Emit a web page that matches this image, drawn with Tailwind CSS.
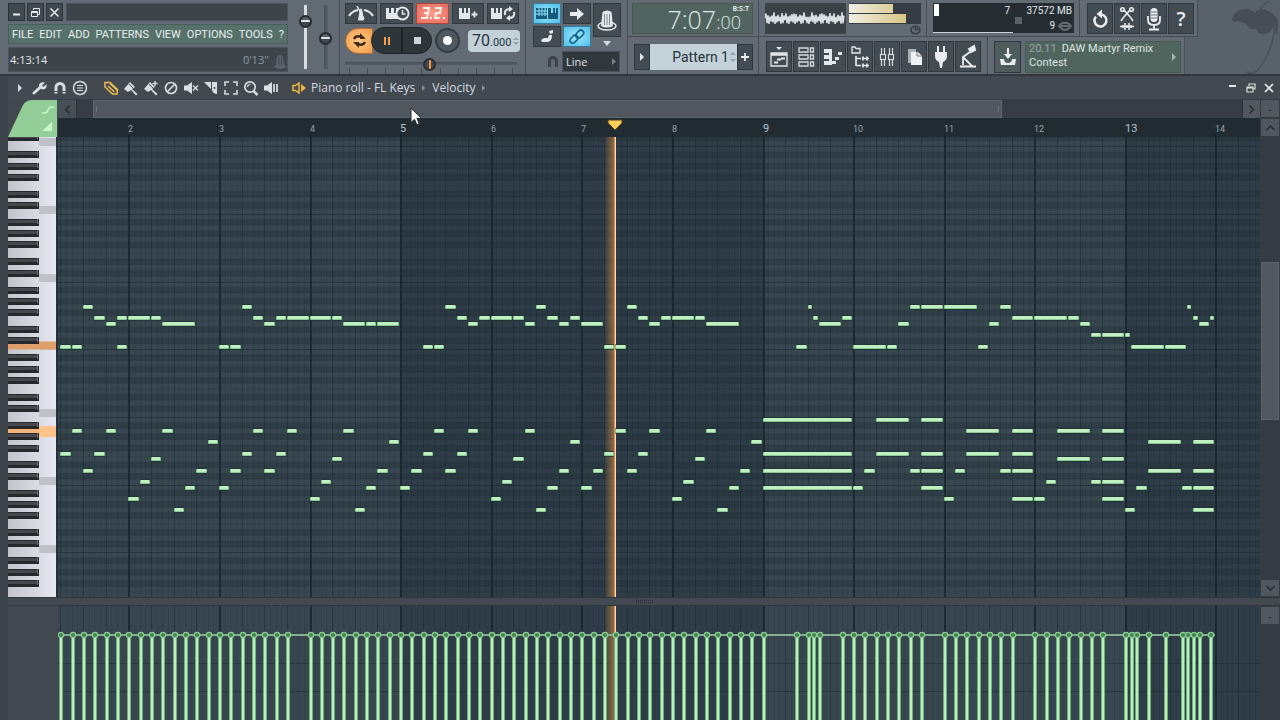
<!DOCTYPE html>
<html lang="en">
<head>
<meta charset="utf-8">
<title>Piano roll - FL Keys</title>
<script src="https://cdn.jsdelivr.net/npm/@tailwindcss/browser@4"></script>
</head>
<body class="bg-[#41484f] font-['Open_Sans','Noto_Sans',sans-serif] text-[#d5dbe0]">
<div class="relative flex h-screen min-h-[500px] flex-col overflow-hidden">

<!-- Toolbar -->
<header class="flex shrink-0 items-stretch border-b-2 border-[#30373e] bg-[#5a6269]">
  <!-- Menu and hint panel -->
  <section class="flex w-[340px] shrink-0 border-r border-[#454c53] bg-[#626b73] pl-2">
    <div class="flex w-[280px] flex-col gap-[3px] pt-[3px] pb-[2px]">
      <div class="flex h-[18px] gap-[2px]">
        <button aria-label="Minimize" class="flex w-[17px] items-center justify-center border border-[#2b3238] bg-[#414950]"><svg width="11" height="11" viewBox="0 0 11 11"><path d="M2 7.5h7" stroke="#e6ebef" stroke-width="2"/></svg></button>
        <button aria-label="Restore" class="flex w-[17px] items-center justify-center border border-[#2b3238] bg-[#414950]"><svg width="11" height="11" viewBox="0 0 11 11" fill="none" stroke="#e6ebef"><path d="M3.5 3V1.5h6v6H8M1.5 4.500h6v5h-6zM1.5 5.500h6"/></svg></button>
        <button aria-label="Close" class="flex w-[17px] items-center justify-center border border-[#2b3238] bg-[#414950]"><svg width="11" height="11" viewBox="0 0 11 11"><path d="M1.500 1.500l8 8M9.500 1.500l-8 8" stroke="#e6ebef" stroke-width="1.500"/></svg></button>
        <div class="ml-px flex-1 border border-[#4d555c] bg-[#3d454b]"></div>
      </div>
      <nav class="flex h-5 items-center justify-between border border-[#4a5f5a] bg-[#56706a] px-[3px] font-['Roboto',sans-serif] text-[11px] leading-none text-[#e8f1ee]">
        <button>FILE</button><button>EDIT</button><button>ADD</button><button>PATTERNS</button><button>VIEW</button><button>OPTIONS</button><button>TOOLS</button><button>?</button>
      </nav>
      <div class="flex flex-1 items-center border border-[#4d555c] bg-[#3d454b] pl-px text-[11px] leading-none">
        <span class="flex-1 text-[#e4e9ed]">4:13:14</span><span class="text-[#8f979d]">0'13''</span>
        <svg class="mt-1 ml-[4px]" width="14" height="18" viewBox="0 0 14 18"><path d="M4 3q3-2 6 0l1 9q3 0 2 2-6 4-12 0 0-2 2-2z" fill="#59626a"/><path d="M6 4v8M8.500 4v8" stroke="#434b52"/></svg>
      </div>
    </div>
    <div class="flex flex-1 items-center justify-center gap-1 pl-1">
      <input aria-label="Main volume" type="range" value="80" class="h-[64px] w-4 appearance-none bg-[linear-gradient(90deg,transparent_6px,#d8dde1_6px,#d8dde1_9px,transparent_9px)] [direction:rtl] [writing-mode:vertical-lr] [&::-webkit-slider-thumb]:size-[13px] [&::-webkit-slider-thumb]:appearance-none [&::-webkit-slider-thumb]:rounded-full [&::-webkit-slider-thumb]:border-2 [&::-webkit-slider-thumb]:border-[#262c31] [&::-webkit-slider-thumb]:bg-[linear-gradient(#596168_3px,#dde2e6_3px,#dde2e6_5px,#41484f_5px)]">
      <input aria-label="Main pitch" type="range" value="47" class="h-[64px] w-4 appearance-none bg-[linear-gradient(90deg,transparent_6px,#484f56_6px,#596168_10px,transparent_10px)] [direction:rtl] [writing-mode:vertical-lr] [&::-webkit-slider-thumb]:size-[13px] [&::-webkit-slider-thumb]:appearance-none [&::-webkit-slider-thumb]:rounded-full [&::-webkit-slider-thumb]:border-2 [&::-webkit-slider-thumb]:border-[#262c31] [&::-webkit-slider-thumb]:bg-[linear-gradient(#596168_3px,#dde2e6_3px,#dde2e6_5px,#41484f_5px)]">
    </div>
  </section>

  <!-- Transport -->
  <section class="flex w-[186px] shrink-0 flex-col border-r border-[#454c53] bg-[#626b73] pt-[3px] pl-[5px]">
    <div class="flex h-[21px] gap-[3px]">
      <button aria-label="Metronome" class="flex w-8 items-center justify-center border border-[#30373d] bg-[#444c53]"><svg width="28" height="17" viewBox="0 0 28 17" fill="none" stroke="#e3e8ec"><path d="M2 11q3-5 9-6M17 5q6 1 9 6" stroke-width="2"/><path d="M11.500 15l2-11h1l2 11z" fill="#e3e8ec"/><path d="M10 1l7 13" stroke-width="1.500"/></svg></button>
      <button aria-label="Wait for input" class="flex w-[33px] items-center justify-center border border-[#30373d] bg-[#444c53]"><svg width="28" height="17" viewBox="0 0 28 17" fill="none" stroke="#e3e8ec"><path d="M3 3h3v5h2V3h3v5h2V3h2v11H3z" fill="#e3e8ec" stroke="none"/><circle cx="19.500" cy="8.500" r="6" fill="#444c53" stroke-width="1.800"/><path d="M19.500 5v4h3" stroke-width="1.500"/></svg></button>
      <button aria-label="Countdown" class="flex w-[33px] items-center justify-center border border-[#a5453c] bg-[radial-gradient(#ff9d8c,#e6695b)]"><svg width="27" height="17" viewBox="0 0 27 17" fill="none" stroke="#fff1e8" stroke-width="2"><path d="M4 3h6L9 8H5h4l-1 5H2M16 3h6l-1 5h-4l-1 5h5"/><path d="M11 13h2M24 13h2"/></svg></button>
      <button aria-label="Overdub" class="flex w-8 items-center justify-center border border-[#30373d] bg-[#444c53]"><svg width="28" height="17" viewBox="0 0 28 17"><path d="M5 3h3v5h2V3h2v5h2V3h2v11H5z" fill="#e3e8ec"/><path d="M17.500 9.500h6M20.500 6.500v6" stroke="#e3e8ec" stroke-width="1.800"/></svg></button>
      <button aria-label="Loop record" class="flex w-8 items-center justify-center border border-[#30373d] bg-[#444c53]"><svg width="28" height="17" viewBox="0 0 28 17" fill="none"><path d="M2 3h3v5h2V3h2v5h2V3h2v11H2z" fill="#e3e8ec"/><path d="M16 10q-1-6 5-6M25 7q1 6-5 6" stroke="#e3e8ec" stroke-width="2"/><path d="M20 1l4 3-4 3zM21 10l-4 3 4 3z" fill="#e3e8ec"/></svg></button>
    </div>
    <div class="mt-[3px] flex h-[27px] items-center">
      <button aria-label="Song mode" class="-mr-[2px] flex h-[26px] w-7 items-center justify-center rounded-l-full border border-[#b06a33] bg-[radial-gradient(#ffc983,#f19c4e)]"><svg width="15" height="15" viewBox="0 0 15 15" fill="none" stroke="#402a18" stroke-width="2.500"><path d="M2 6q2-4 7-2M13 9q-2 4-7 2"/><path d="M8 0v6h6zM7 15V9H1z" fill="#402a18" stroke="none"/></svg></button>
      <button aria-label="Pause" class="flex h-[27px] w-[31px] items-center justify-center rounded-l-full border border-[#1d2226] bg-[#2e353b]"><svg width="8" height="8" viewBox="0 0 8 8"><path d="M1 0h2v8H1zM5 0h2v8H5z" fill="#f5a04e"/></svg></button>
      <button aria-label="Stop" class="flex h-[27px] w-[30px] items-center justify-center rounded-r-full border border-[#1d2226] bg-[#2e353b]"><span class="size-[7px] bg-[#cfd5da]"></span></button>
      <button aria-label="Record" class="ml-[3px] flex size-[25px] items-center justify-center rounded-full border-2 border-[#343b41] bg-[#50585f]"><span class="size-[9px] rounded-full bg-white"></span></button>
      <label class="ml-2 flex h-[22px] w-[52px] items-center rounded-[4px] bg-[#c3d1d8] pl-[2px] font-['Roboto',sans-serif] text-[#27353d]"><input aria-label="Tempo" value="70" class="w-5 text-right text-base leading-none"><span class="pt-[3px] text-[11px] leading-none">.000</span><svg class="ml-[2px] shrink-0" width="6" height="10" viewBox="0 0 6 10"><path d="M0 4l3-3 3 3zM0 6l3 3 3-3z" fill="#96a5ae"/></svg></label>
    </div>
    <div class="relative w-[172px]">
      <input aria-label="Tempo coarse" type="range" value="49" class="block h-5 w-full appearance-none bg-[linear-gradient(transparent_8px,#484f56_8px,#596168_11px,transparent_11px)] [&::-webkit-slider-thumb]:size-[13px] [&::-webkit-slider-thumb]:appearance-none [&::-webkit-slider-thumb]:rounded-full [&::-webkit-slider-thumb]:border-2 [&::-webkit-slider-thumb]:border-[#262c31] [&::-webkit-slider-thumb]:bg-[linear-gradient(90deg,#41484f_4px,#f0953f_4px,#f0953f_6px,#41484f_6px)]">
      <div class="pointer-events-none absolute inset-x-1 bottom-0 flex h-[6px] justify-between opacity-70"><i class="w-px bg-[#3a4147]"></i><i class="w-px bg-[#3a4147]"></i><i class="w-px bg-[#3a4147]"></i><i class="w-px bg-[#3a4147]"></i><i class="w-px bg-[#3a4147]"></i><i class="w-px bg-[#3a4147]"></i><i class="w-px bg-[#3a4147]"></i><i class="w-px bg-[#3a4147]"></i><i class="w-px bg-[#3a4147]"></i><i class="w-px bg-[#3a4147]"></i></div>
    </div>
  </section>

  <!-- Recording options -->
  <section class="flex w-[102px] shrink-0 flex-col border-r border-[#454c53] bg-[#626b73] pt-[3px] pl-[7px]">
    <div class="flex gap-[2px]">
      <div class="grid grid-cols-2 gap-[2px]">
        <button aria-label="Typing keyboard to piano" class="flex h-[21px] w-7 items-center justify-center border border-[#337f9d] bg-[radial-gradient(#9beaff,#52bce8)]"><svg width="24" height="14" viewBox="0 0 24 14"><path d="M1 1h11v11H1z" fill="#155a7a"/><path d="M1 4h11M1 7h11M4 1v8M7 1v8M10 1v8" stroke="#8fe2fb"/><path d="M13 1h3v5h2V1h2v5h1V1h2v11H13z" fill="#155a7a"/></svg></button>
        <button aria-label="Step edit" class="flex h-[21px] w-7 items-center justify-center border border-[#30373d] bg-[#444c53]"><svg width="16" height="14" viewBox="0 0 16 14"><path d="M1 5h7V1l7 6-7 6V9H1z" fill="#e9edf0"/></svg></button>
        <button aria-label="Automation glide" class="flex h-[21px] w-7 items-center justify-center border border-[#30373d] bg-[#444c53]"><svg width="16" height="14" viewBox="0 0 16 14" fill="#e3e8ec"><path d="M2 10l3-2 4 0 1-3h3q0 6-4 7H3z"/><path d="M10 1l4-1v3l-3 1z"/></svg></button>
        <button aria-label="Link controllers" class="flex h-[21px] w-7 items-center justify-center border border-[#337f9d] bg-[radial-gradient(#9beaff,#52bce8)]"><svg width="18" height="17" viewBox="0 0 18 17" fill="none" stroke="#17678a" stroke-width="1.700"><rect x="7" y="3.500" width="9" height="5.500" rx="2.700" transform="rotate(-45 11.500 6)"/><rect x="1.500" y="8" width="9" height="5.500" rx="2.700" transform="rotate(-45 6.500 11)"/></svg></button>
      </div>
      <button aria-label="Multilink" class="flex h-[34px] w-7 items-center justify-center border border-[#30373d] bg-[#444c53]"><svg width="22" height="24" viewBox="0 0 22 24"><ellipse cx="11" cy="18" rx="9" ry="4" fill="none" stroke="#e3e8ec" stroke-width="1.500"/><path d="M6.500 4q4.500-3 9 0l1.500 14q-6 3-12 0z" fill="#e3e8ec"/><path d="M8.500 6v11M11 6v11M13.500 6v11" stroke="#848c93"/></svg></button>
    </div>
    <svg class="-mt-[6px] ml-[70px]" width="8" height="5" viewBox="0 0 8 5"><path d="M0 0h8L4 5z" fill="#d5dbe0"/></svg>
    <div class="mt-[5px] flex items-center gap-[3px] pl-[14px]">
      <svg width="12" height="13" viewBox="0 0 12 13"><path d="M2.500 12V6a3.500 3.500 0 017 0v6" fill="none" stroke="#3c4349" stroke-width="3"/></svg>
      <div class="relative"><select aria-label="Snap" class="block h-[21px] w-[58px] appearance-none border border-[#4b535a] bg-[#30373d] pl-[3px] text-[11px] leading-none text-[#dde2e6]"><option>Line</option></select><svg class="pointer-events-none absolute top-[7px] right-1" width="4" height="7" viewBox="0 0 4 7"><path d="M0 0l4 3.500L0 7z" fill="#7b848b"/></svg></div>
    </div>
  </section>

  <!-- Right toolbar, two rows -->
  <div class="flex flex-1 flex-col">
    <div class="flex h-[37px]">
      <section class="flex w-[131px] border-r border-b border-[#454c53] bg-[#626b73] pt-[3px] pb-[2px] pl-1">
        <div class="relative flex w-[121px] items-baseline justify-end border border-[#47564f] bg-[#52645f] pr-[11px] font-['Open_Sans',sans-serif] text-[25px] leading-[31px] font-light text-[#dce9e4]"><span>7:07</span><span class="text-[18px] leading-none">:00</span><span class="absolute top-px right-[3px] text-[7px] leading-none font-bold">B:S:T</span></div>
      </section>
      <section class="flex w-[168px] gap-[3px] border-r border-b border-[#454c53] bg-[#626b73] pt-[3px] pl-[6px]">
        <div class="h-[31px] w-[81px] bg-[#3a4248]"><svg id="scope" class="block" width="81" height="31"></svg></div>
        <div class="w-[72px]">
          <div class="flex h-[21px] flex-col gap-px bg-[#353c43] py-px"><div class="h-[9px] w-[44px] bg-[linear-gradient(90deg,#f0eee4,#dccf9b)]"></div><div class="h-[9px] w-[57px] bg-[linear-gradient(90deg,#f0eee4,#d9c684)]"></div></div>
          <svg class="mt-px ml-[61px]" width="11" height="10" viewBox="0 0 11 10" fill="none" stroke="#343b41" stroke-width="1.500"><ellipse cx="5.500" cy="5" rx="4.500" ry="3.800"/><path d="M5.500 5V2M5.500 5l3-1"/></svg>
        </div>
      </section>
      <section class="flex w-[153px] border-r border-b border-[#454c53] bg-[#626b73] pt-[3px] pb-[3px] pl-[6px] font-['Roboto',sans-serif] text-[10px] leading-[15px] whitespace-nowrap text-[#e4e9ed]">
        <div class="relative w-[80px] border-b border-[#cbd1d6] bg-[#252d33] pr-[3px] text-right"><i class="absolute top-px left-px h-3 w-[5px] bg-white"></i>7</div>
        <div class="relative w-[61px] bg-[#252d33] pr-[2px] text-right"><div>37572 MB</div><div class="flex items-center justify-end gap-[3px]"><span>9</span><svg width="14" height="10" viewBox="0 0 14 10" fill="none" stroke="#666f76" stroke-width="2"><path d="M1 5q3-4 6-3 3-1 6 3-3 4-6 4T1 5zM3 5h8"/></svg></div><i class="absolute top-[14px] left-[2px] size-[7px] bg-[#5a636a]"></i></div>
      </section>
      <section class="flex gap-px border-r border-b border-[#454c53] bg-[#626b73] pt-[3px] pr-[3px] pb-[2px] pl-[7px]">
        <button aria-label="Undo" class="flex w-[26px] items-center justify-center border border-[#30373d] bg-[#444c53]"><svg width="20" height="22" viewBox="0 0 20 22" fill="none" stroke="#e9edf0" stroke-width="2.500"><path d="M11 6.500a6 6 0 11-5 2"/><path d="M12 1.500v9L6.500 6z" fill="#e9edf0" stroke="none"/></svg></button>
        <button aria-label="Edison record" class="flex w-[26px] items-center justify-center border border-[#30373d] bg-[#444c53]"><svg width="18" height="26" viewBox="0 0 18 26" fill="none" stroke="#e9edf0" stroke-width="1.600"><path d="M5 12l7-8M13 12L6 4"/><circle cx="4.500" cy="3.500" r="1.800"/><circle cx="13.500" cy="3.500" r="1.800"/><path d="M5 12l-2 3M13 12l2 3" /><path d="M2 20.500h14M5 19v3M7 17v7M9 19v3M11 17v7M13 19v3" stroke-width="1.500"/></svg></button>
        <button aria-label="One-click audio recording" class="flex w-[26px] items-center justify-center border border-[#30373d] bg-[#444c53]"><svg width="16" height="26" viewBox="0 0 16 26" fill="none" stroke="#e9edf0" stroke-width="1.800"><rect x="4.500" y="2" width="7" height="14" rx="3.500" fill="#e9edf0" stroke="none"/><path d="M5 6h6M5 9h6M5 12h6" stroke="#6a7279" stroke-width="1"/><path d="M2 10v4q0 5 6 5t6-5v-4M8 19v4M3 23.500h10"/></svg></button>
        <button aria-label="Help" class="w-[26px] border border-[#30373d] bg-[#444c53] text-xl leading-none font-semibold text-[#e9edf0]">?</button>
      </section>
    </div>
    <div class="flex h-[37px]">
      <section class="flex w-[131px] border-r border-[#454c53] bg-[#626b73] pt-[7px] pb-[4px] pl-[6px]">
        <button aria-label="Pattern menu" class="flex w-4 items-center justify-center border border-[#30373d] bg-[#444c53]"><svg width="4" height="8" viewBox="0 0 4 8"><path d="M0 0l4 4-4 4z" fill="#e3e8ec"/></svg></button>
        <div class="flex items-center bg-[#c3d1d8]"><input aria-label="Pattern" value="Pattern 1" class="w-[79px] text-right font-['Roboto',sans-serif] text-sm leading-none text-[#25333b]"><svg class="mx-px" width="6" height="12" viewBox="0 0 6 12"><path d="M0 4l3-3 3 3zM0 8l3 3 3-3z" fill="#93a3ac"/></svg></div>
        <button aria-label="Add pattern" class="flex w-4 items-center justify-center border border-[#30373d] bg-[#444c53]"><svg width="8" height="8" viewBox="0 0 8 8"><path d="M0 4h8M4 0v8" stroke="#e9edf0" stroke-width="1.800"/></svg></button>
      </section>
      <section class="flex w-[229px] gap-px border-r border-[#454c53] bg-[#626b73] pt-1 pb-[2px] pl-[7px]">
        <button aria-label="Playlist" class="flex w-[26px] items-center justify-center border border-[#30373d] bg-[#444c53]"><svg width="20" height="24" viewBox="0 0 20 24" fill="none" stroke="#e3e8ec" stroke-width="1.300"><path d="M7 2h6l-3 3z" fill="#e3e8ec" stroke="none"/><path d="M2 8h16v13H2z"/><path d="M2 9.500h16" stroke-width="2.500"/><path d="M5 17.500h4M8 14.500h4M12 13.500h4" stroke-width="2"/></svg></button>
        <button aria-label="Channel rack" class="flex w-[26px] items-center justify-center border border-[#30373d] bg-[#444c53]"><svg width="20" height="24" viewBox="0 0 20 24" fill="none" stroke="#d5dbe0" stroke-width="1.300"><path d="M3 3h9v4H3zM3 10h9v4H3zM3 17h9v4H3zM14.500 3h3v4h-3zM14.500 10h3v4h-3zM14.500 17h3v4h-3z"/></svg></button>
        <button aria-label="Piano roll" class="flex w-[26px] items-center justify-center border border-[#30373d] bg-[#444c53]"><svg width="22" height="24" viewBox="0 0 22 24"><path d="M2 4h8v16H2v-4h5v-2H2v-4h5V8H2z" fill="#e3e8ec"/><path d="M10 17.500h4M13 13.500h4M16 8.500h4" stroke="#e3e8ec" stroke-width="3"/></svg></button>
        <button aria-label="Browser" class="flex w-[26px] items-center justify-center border border-[#30373d] bg-[#444c53]"><svg width="22" height="26" viewBox="0 0 22 26" fill="none" stroke="#e3e8ec" stroke-width="1.300"><path d="M3 3h3l1 1.500h4V9H3z"/><path d="M7 12v10M7 14.500h5M7 21.500h5M13 14.500h7M13 21.500h7M14 12.500v4M18 12.500v4M14 19.500v4M18 19.500v4" stroke-width="1.700"/></svg></button>
        <button aria-label="Mixer" class="flex w-[26px] items-center justify-center border border-[#30373d] bg-[#444c53]"><svg width="18" height="24" viewBox="0 0 18 24" fill="none" stroke="#d5dbe0" stroke-width="1.200"><path d="M3.500 3v18M6.500 3v18M11.500 3v18M14.500 3v18"/><rect x="2.500" y="9.500" width="5" height="5" fill="#444c53"/><rect x="10.500" y="9.500" width="5" height="5" fill="#444c53"/></svg></button>
        <button aria-label="Project picker" class="flex w-[26px] items-center justify-center border border-[#30373d] bg-[#444c53]"><svg width="18" height="22" viewBox="0 0 18 22"><path d="M3 3h8v14H3z" fill="#aab2b9"/><path d="M6 6h7l4 4v9H6z" fill="#eff2f5"/><path d="M12 5v5h5" fill="none" stroke="#6a727a"/></svg></button>
        <button aria-label="Plugin picker" class="flex w-[26px] items-center justify-center border border-[#30373d] bg-[#444c53]"><svg width="16" height="26" viewBox="0 0 16 26" fill="#e9edf0"><path d="M4 2h2v6H4zM10 2h2v6h-2zM2 8h12v4q0 4-4 6l-1 6H7l-1-6q-4-2-4-6z"/></svg></button>
        <button aria-label="Tempo tapper" class="flex w-[26px] items-center justify-center border border-[#30373d] bg-[#444c53]"><svg width="20" height="26" viewBox="0 0 20 26" fill="none" stroke="#e9edf0"><path d="M11 5l5-3 1 4-4 2z" fill="#e9edf0" stroke-width="2"/><path d="M12 8L5 13v8M5 13l9 9M2 22.500h16" stroke-width="1.800"/></svg></button>
      </section>
      <section class="flex gap-1 border-r border-[#4a5158] bg-[#626b73] pt-1 pr-[3px] pb-px pl-[6px]">
        <button aria-label="Download" class="flex w-[27px] items-center justify-center border border-[#30373d] bg-[#4f5c5d]"><svg width="18" height="22" viewBox="0 0 18 22"><path d="M8 2h2v6h3l-4 5-4-5h3z" fill="#e9edf0"/><path d="M1 13h4q0 4 4 4t4-4h4l-1 6H2z" fill="#e9edf0"/></svg></button>
        <a href="#" class="relative flex w-[156px] flex-col border border-[#465953] bg-[#51655f] pl-[3px] font-['Roboto',sans-serif] text-[11px] leading-[14px] text-[#dbe6e2]"><span><span class="mr-[5px] text-[#93a8a1]">20.11</span>DAW Martyr Remix</span><span>Contest</span><svg class="absolute top-[11px] right-1" width="4" height="8" viewBox="0 0 4 8"><path d="M0 0l4 4-4 4z" fill="#a3b5af"/></svg></a>
      </section>
    </div>
  </div>
  <svg class="absolute top-0 right-0" width="50" height="74" viewBox="0 0 50 74"><path d="M2 19q3-10 13-10 6 0 10 4 5-7 15-1 8 4 8 12l-1 12q-2-7-4-9-3 7-9 7-6 0-8-5-5 2-8-3-6-6-13-4-3 0-3-3z" fill="#464d54"/><path d="M28 14Q31 6 40 0M45 26q-2 25-18 45-5 4-11 1" fill="none" stroke="#4a5158" stroke-width="1.500"/></svg>
</header>

<!-- Piano roll window -->
<main class="flex min-h-0 flex-1 flex-col border-l-8 border-[#3c434a]">
  <div class="flex h-[23px] shrink-0 items-center bg-[#424950] pr-[5px] pl-[10px] text-xs leading-none">
    <svg class="mr-[10px]" width="4" height="8" viewBox="0 0 4 8"><path d="M0 0l4 4-4 4z" fill="#d5dbe0"/></svg>
    <div class="flex items-center gap-1">
      <button aria-label="Tools"><svg width="16" height="16" viewBox="0 0 16 16"><path d="M2 13L8 7.500" stroke="#d8dde1" stroke-width="3" stroke-linecap="round"/><path d="M13 2.500L10.500 5v1.500H12l2.500-2.500q1 5-3.500 5.500Q7 9 7 6q0-4.500 6-3.500z" fill="#d8dde1"/></svg></button>
      <button aria-label="Snap"><svg width="16" height="16" viewBox="0 0 16 16"><path d="M4 13.500V7.500a4 4 0 018 0v6" fill="none" stroke="#d8dde1" stroke-width="3"/><path d="M2 11.500h4M10 11.500h4" stroke="#424950"/></svg></button>
      <button aria-label="Stamp"><svg width="16" height="16" viewBox="0 0 16 16" fill="none" stroke="#d8dde1" stroke-width="1.500"><circle cx="8" cy="8" r="6.500"/><path d="M5 5.500h6M5 8h6M5 10.500h6" stroke-width="1.200"/></svg></button>
    </div>
    <div class="ml-[15px] flex items-center gap-1">
      <button aria-label="Draw"><svg width="16" height="16" viewBox="0 0 16 16" fill="none" stroke="#f0bd51" stroke-width="1.500"><path d="M2 2.500h5l7.500 7-.5 4.500-4.500 0L2 7zM5 6l6.500 6M7 3.500L14 10"/></svg></button>
      <button aria-label="Paint"><svg width="16" height="16" viewBox="0 0 16 16"><path d="M1 9L7 2l5 5-3 2 5.500 5L13 15.500 8 10l-3 2z" fill="#d8dde1"/><path d="M6 4l5 5" stroke="#424950"/></svg></button>
      <button aria-label="Paint sequence"><svg width="16" height="16" viewBox="0 0 16 16"><path d="M1 9L7 2l5 5-3 2 5.500 5L13 15.500 8 10l-3 2z" fill="#d8dde1"/><path d="M6 4l5 5" stroke="#424950"/><path d="M12 1v5M9.500 3.500h5" stroke="#d8dde1" stroke-width="1.300"/></svg></button>
      <button aria-label="Delete"><svg width="16" height="16" viewBox="0 0 16 16" fill="none" stroke="#d8dde1" stroke-width="1.700"><circle cx="8" cy="8" r="5.500"/><path d="M4 12l8-8"/></svg></button>
      <button aria-label="Mute"><svg width="16" height="16" viewBox="0 0 16 16"><path d="M1 5.500h3L9 2v12l-5-3.500H1z" fill="#d8dde1"/><path d="M10 5.500l5 5M15 5.500l-5 5" stroke="#d8dde1" stroke-width="1.400"/></svg></button>
      <button aria-label="Slice"><svg width="16" height="16" viewBox="0 0 16 16"><path d="M1 2h7v7zM9 2h5v12q-4 0-5-4z" fill="#d8dde1"/><circle cx="11.500" cy="8" r="1" fill="#424950"/></svg></button>
      <button aria-label="Select"><svg width="16" height="16" viewBox="0 0 16 16" fill="none" stroke="#d8dde1" stroke-width="1.600"><path d="M2 6V2h4M10 2h4v4M14 10v4h-4M6 14H2v-4"/></svg></button>
      <button aria-label="Zoom"><svg width="16" height="16" viewBox="0 0 16 16" fill="none" stroke="#d8dde1"><circle cx="7" cy="7" r="5.200" stroke-width="1.700"/><path d="M4.500 7q0-2.500 3-2.500" stroke-width="1.200"/><path d="M10.500 11l4 4" stroke-width="2.500"/></svg></button>
      <button aria-label="Playback"><svg width="16" height="16" viewBox="0 0 16 16"><path d="M1 5.500h3L9 2v12l-5-3.500H1z" fill="#d8dde1"/><path d="M11 4v8M14 4v8" stroke="#d8dde1" stroke-width="1.700"/></svg></button>
    </div>
    <svg class="mr-1 ml-3" width="16" height="16" viewBox="0 0 16 16"><path d="M2 5.500h2.500L8 3v10l-3.500-2.500H2z" fill="none" stroke="#f0b53f" stroke-width="1.500"/><path d="M10 4l5 4-5 4z" fill="#f0b53f"/></svg>
    <button>Piano roll - FL Keys</button>
    <svg class="mr-[6px] ml-[7px]" width="4" height="6" viewBox="0 0 4 6"><path d="M0 0l3 3-3 3z" fill="#8b949b"/></svg>
    <button>Velocity</button>
    <svg class="mx-[6px]" width="4" height="6" viewBox="0 0 4 6"><path d="M0 0l3 3-3 3z" fill="#8b949b"/></svg>
    <div class="ml-auto flex gap-[6px]">
      <button aria-label="Minimize"><svg width="12" height="12" viewBox="0 0 12 12"><path d="M2 4h7" stroke="#e6ebef" stroke-width="2"/></svg></button>
      <button aria-label="Restore"><svg width="12" height="12" viewBox="0 0 12 12" fill="none" stroke="#d5e3d5" stroke-width="1.200"><path d="M4 4V2h6v5H8M2 5h6v5H2zM2 6h6"/></svg></button>
      <button aria-label="Close"><svg width="12" height="12" viewBox="0 0 12 12"><path d="M2 2l8 8M10 2l-8 8" stroke="#e6ebef" stroke-width="1.700"/></svg></button>
    </div>
  </div>

  <div class="grid min-h-0 flex-1 grid-cols-[50px_1fr_20px] grid-rows-[38px_minmax(0,1fr)_9px_114px]">
    <button aria-label="Note color and slide" class="block"><svg width="50" height="38" viewBox="0 0 50 38"><path d="M0 38L14 8Q17 1 24 1h25v37z" fill="#93cd98"/><path d="M34 14h3q2 0 3-3t3-3h3" fill="none" stroke="#c9f7cb" stroke-width="1.500"/><path d="M34 32h10v-9z" fill="#c9f7cb"/></svg></button>
    <div class="flex min-w-0 flex-col">
      <div class="flex h-[19px] border-t border-[#353c42] bg-[#363d44]">
        <button aria-label="Scroll left" class="flex w-[18px] items-center justify-center bg-[#485057]"><svg width="7" height="9" viewBox="0 0 7 9"><path d="M5.500 .5L1.500 4.500l4 4" fill="none" stroke="#22282d" stroke-width="1.300"/></svg></button>
        <div class="flex flex-1 border-l border-[#2b3238]" role="scrollbar" aria-label="Time position" aria-controls="roll" aria-valuenow="2">
          <div class="flex w-[78%] items-center justify-between border border-[#5e656c] bg-[#50575e] px-[2px]" style="margin-left:1.400%"><i class="h-[6px] w-px bg-[#6d757c]"></i><i class="h-[6px] w-px bg-[#6d757c]"></i></div>
        </div>
        <button aria-label="Scroll right" class="flex w-[18px] items-center justify-center border-l border-[#2b3238] bg-[#50575e]"><svg width="7" height="9" viewBox="0 0 7 9"><path d="M1.500 .5l4 4-4 4" fill="none" stroke="#22282d" stroke-width="1.300"/></svg></button>
      </div>
      <svg id="ruler" class="block h-[19px] w-full bg-[#202b32] font-['Roboto',sans-serif]"></svg>
    </div>
    <div class="flex flex-col">
      <button aria-label="Zoom out" class="h-[19px] border border-[#343b41] bg-[#50575e] text-[11px] leading-none text-[#22282d]">-</button>
      <button aria-label="Scroll up" class="flex h-[19px] items-center justify-center border border-[#343b41] bg-[#50575e]"><svg width="9" height="6" viewBox="0 0 9 6"><path d="M.5 5l4-4 4 4" fill="none" stroke="#22282d" stroke-width="1.300"/></svg></button>
    </div>

    <svg id="keys" class="block h-full w-full overflow-hidden" aria-label="Keyboard"></svg>
    <svg id="roll" class="block h-full w-full overflow-hidden" aria-label="Notes"></svg>
    <div class="flex flex-col bg-[#353b42]" role="scrollbar" aria-label="Key position" aria-controls="roll" aria-valuenow="40">
      <div class="flex-[126]"></div>
      <div class="mx-px flex-[156] border border-[#5c636a] bg-[#50575e]"></div>
      <div class="flex-[160]"></div>
      <button aria-label="Scroll down" class="flex h-[18px] items-center justify-center border border-[#343b41] bg-[#50575e]"><svg width="9" height="6" viewBox="0 0 9 6"><path d="M.5 1l4 4 4-4" fill="none" stroke="#22282d" stroke-width="1.300"/></svg></button>
    </div>

    <div class="col-span-3 flex items-center justify-center border-y border-[#30373d] bg-[#424950]"><i class="h-[3px] w-[17px] border-y border-dotted border-[#262c31]"></i></div>

    <div class="bg-[#41484f]"></div>
    <svg id="velocity" class="block h-full w-full overflow-hidden" aria-label="Velocity"></svg>
    <div class="bg-[#353b42]"><button aria-label="Collapse" class="block h-[19px] w-full border border-[#343b41] bg-[#50575e] text-[11px] leading-none text-[#22282d]">-</button></div>
  </div>
</main>

<!-- Mouse pointer -->
<svg class="pointer-events-none absolute top-[107px] left-[410px]" width="13" height="19" viewBox="0 0 13 19"><path d="M1 1v14.500l3.500-3.200 2.400 5.400 2.400-1-2.400-5.300H11.500z" fill="#fff" stroke="#23282c"/></svg>
</div>

<script>
const LEFT = 58, U = 90.6 / 8, ROW = 5.64, TOP = 137;
const xAt = t => Math.round(128.3 - LEFT + t * U);
const yAt = p => 346.5 - TOP - p * ROW;
const rect = (x, y, w, h, f, extra = '') => `<rect x="${x}" y="${y}" width="${w}" height="${h}" fill="${f}" ${extra}/>`;
const isBlack = p => [1, 3, 6, 8, 10].includes(((p % 12) + 12) % 12);

// Notes by pitch: start or [start, length], in eighths of a bar counted from bar 2
const notes = {
  7: [-4, 10, 28, 36, 44, [60, .5], 69, [70, 2], [72, 3], 77, [93.5, .4]],
  5: [-3, -1, [0, 2], 2, 11, 13, [14, 2], [16, 2], 18, 29, 31, [32, 2], 34, 37, 39, 45, 47, [48, 2], 50, [60.5, .5], 63, [78, 2], [80, 3], 83, [94, .5], [95.5, .5]],
  4: [-2, [3, 3], 12, [19, 2], 21, [22, 2], 30, 35, 38, [40, 2], 46, [51, 3], [61, 2], 68, 76, 84, [94.5, 1]],
  2: [85, [86, 2], [88, .5]],
  0: [-6, -5, -1, 8, 9, 26, 27, 42, 43, 59, [64, 3], 67, 75, [88.5, 3], [91.5, 2]],
  '-13': [[56, 8], [66, 3], [70, 2]],
  '-15': [-5, -2, 3, 11, 14, 19, 27, 30, 35, 43, 46, 51, [74, 3], [78, 2], [82, 3], [86, 2]],
  '-17': [7, 23, 39, 55, [90, 3], [94, 2]],
  '-19': [-6, -3, 10, 13, 26, 29, 42, 45, [56, 8], [66, 3], [70, 2], [74, 3], [78, 2]],
  '-20': [2, 18, 34, 50, [82, 3], [86, 2]],
  '-22': [[-7, .9], -4, 6, 9, 12, 22, 25, 28, 38, 41, 44, 54, [56, 8], 65, 69, [70, 2], 73, 77, [78, 2], [90, 3], [94, 2]],
  '-24': [1, 17, 33, 49, 81, 85, [86, 2]],
  '-25': [5, 8, 21, 24, 37, 40, 53, [56, 8], 64, [70, 2], 89, 93, [94, 2]],
  '-27': [0, 16, 32, 48, 72, [78, 2], 80, [86, 2]],
  '-29': [4, 20, 36, 52, 88, [94, 2]]
};

function background(h) {
  return rect(0, 0, 4000, h, '#37464f') + rect(xAt(24), 0, xAt(56) - xAt(24), h, '#2e3d47') + rect(xAt(88), 0, 4000, h, '#2e3d47');
}
function columns(h) {
  let s = '';
  for (let i = -14; i < 400; i++) {
    const bar = i % 16 === 0, beat = i % 4 === 0;
    s += rect(xAt(i / 2), 0, bar ? 2 : 1, h, '#15222b', `opacity="${bar ? .75 : beat ? .4 : i % 2 ? .1 : .18}"`);
  }
  return s;
}
const head = h => rect(604 - LEFT, 0, 10, h, 'url(#glow)') + rect(614 - LEFT, 0, 1, h, '#dd9148') + rect(615 - LEFT, 0, 1, h, '#f6dcb8');
const glow = '<defs><linearGradient id="glow"><stop offset="0" stop-color="#e8923c" stop-opacity="0"/><stop offset="1" stop-color="#d08a48" stop-opacity=".6"/></linearGradient><linearGradient id="key"><stop offset="0" stop-color="#c3c5cb"/><stop offset="1" stop-color="#e6e9f2"/></linearGradient></defs>';

const H = 1600;
let s = glow + background(H), k = '';
k += glow + rect(0, 0, 49, H, 'url(#key)');
for (let p = 38; p > -200; p--) {
  const y = yAt(p);
  if (isBlack(p)) s += rect(0, y - 2.8, 4000, ROW, '#1d2b34', 'opacity=".3"');
  if (((p % 12) + 12) % 12 === 0) {
    s += rect(0, Math.round(y + 2.8), 4000, 1, '#18252d', 'opacity=".5"');
    k += rect(31, Math.round(y - 5), 18, 8, '#bfc1c8');
  } else s += rect(0, y + 2.3, 4000, 1, '#18252d', 'opacity=".12"');
}
s += columns(H) + head(H);
k += rect(31, yAt(0) - 5, 18, 8, '#dea06a') + rect(0, yAt(0) - 3, 31, 6, '#dea06a') + rect(31, yAt(-15) - 5, 18, 11, '#fcc28a') + rect(0, yAt(-15) - 3, 31, 6, '#f5b27a');
for (let p = 38; p > -43; p--) if (isBlack(p)) {
  const y = Math.round(yAt(p) - 3.5);
  k += rect(0, y, 31, 7, '#26282c') + rect(0, y + 1, 29, 3, '#46484d') + rect(29, y, 1, 5, '#6b6d72');
}
k += rect(48, 0, 2, H, '#26313a');
const starts = new Set();
for (const p in notes) for (const n of notes[p]) {
  const [t, len] = Array.isArray(n) ? n : [n, 1];
  if (t >= -6) starts.add(t);
  const x = xAt(t), w = Math.max(3, xAt(t + len) - x - 1), y = Math.round(yAt(+p) - 2);
  s += rect(x, y - 1, w, 6, '#20302f', 'rx="1" opacity=".7"') + rect(x, y, w, 4, '#8cc893', 'rx="1"') + rect(x + 1, y, w - 2, 3, '#c0efc2');
}
document.getElementById('roll').innerHTML = s;
document.getElementById('keys').innerHTML = k;

// Velocity lane
let v = glow + background(H) + columns(H) + rect(0, 57, 4000, 1, '#1c2a33', 'opacity=".5"') + rect(0, 85, 4000, 1, '#1c2a33', 'opacity=".5"') + head(H);
v += rect(3, 28, xAt(96) - 3, 2, '#86b090');
for (const t of starts) {
  const x = xAt(t) + 1;
  v += rect(x - 2, 31, 4, H, '#6fae79') + rect(x - 1, 31, 2, H, '#b9f0bd') + `<circle cx="${x}" cy="29" r="2.700" fill="#4a8055" stroke="#86cd90" stroke-width="1.200"/>`;
}
document.getElementById('velocity').innerHTML = v;

// Ruler
let r = '';
for (let b = 2; b < 15; b++) {
  const major = b % 4 === 1, x = xAt((b - 2) * 8);
  r += `<text x="${x}" y="14" font-size="${major ? 11 : 9}" fill="${major ? '#b9c3ca' : '#98a3ab'}">${b}</text>` + rect(x, 17, 1, 2, '#0f181e');
}
r += `<path d="M${608 - LEFT} 2h14v3l-7 7-7-7z" fill="#f8cf57" stroke="#5a3f1c"/>`;
document.getElementById('ruler').innerHTML = r;

// Oscilloscope trace
let d = '';
for (let x = 1; x < 80; x++) { const a = 1.5 + 5 * Math.abs(Math.sin(x * 1.9) * Math.cos(x * .73)), b = 1.5 + 4 * Math.abs(Math.sin(x * 1.1)); d += `L${x} ${x % 2 ? 15.5 - a : 15.5 + b}`; }
document.getElementById('scope').innerHTML = `<path d="M0 15${d}" stroke="#d9dee2" stroke-width="1.500" fill="none"/>`;
</script>
</body>
</html>
